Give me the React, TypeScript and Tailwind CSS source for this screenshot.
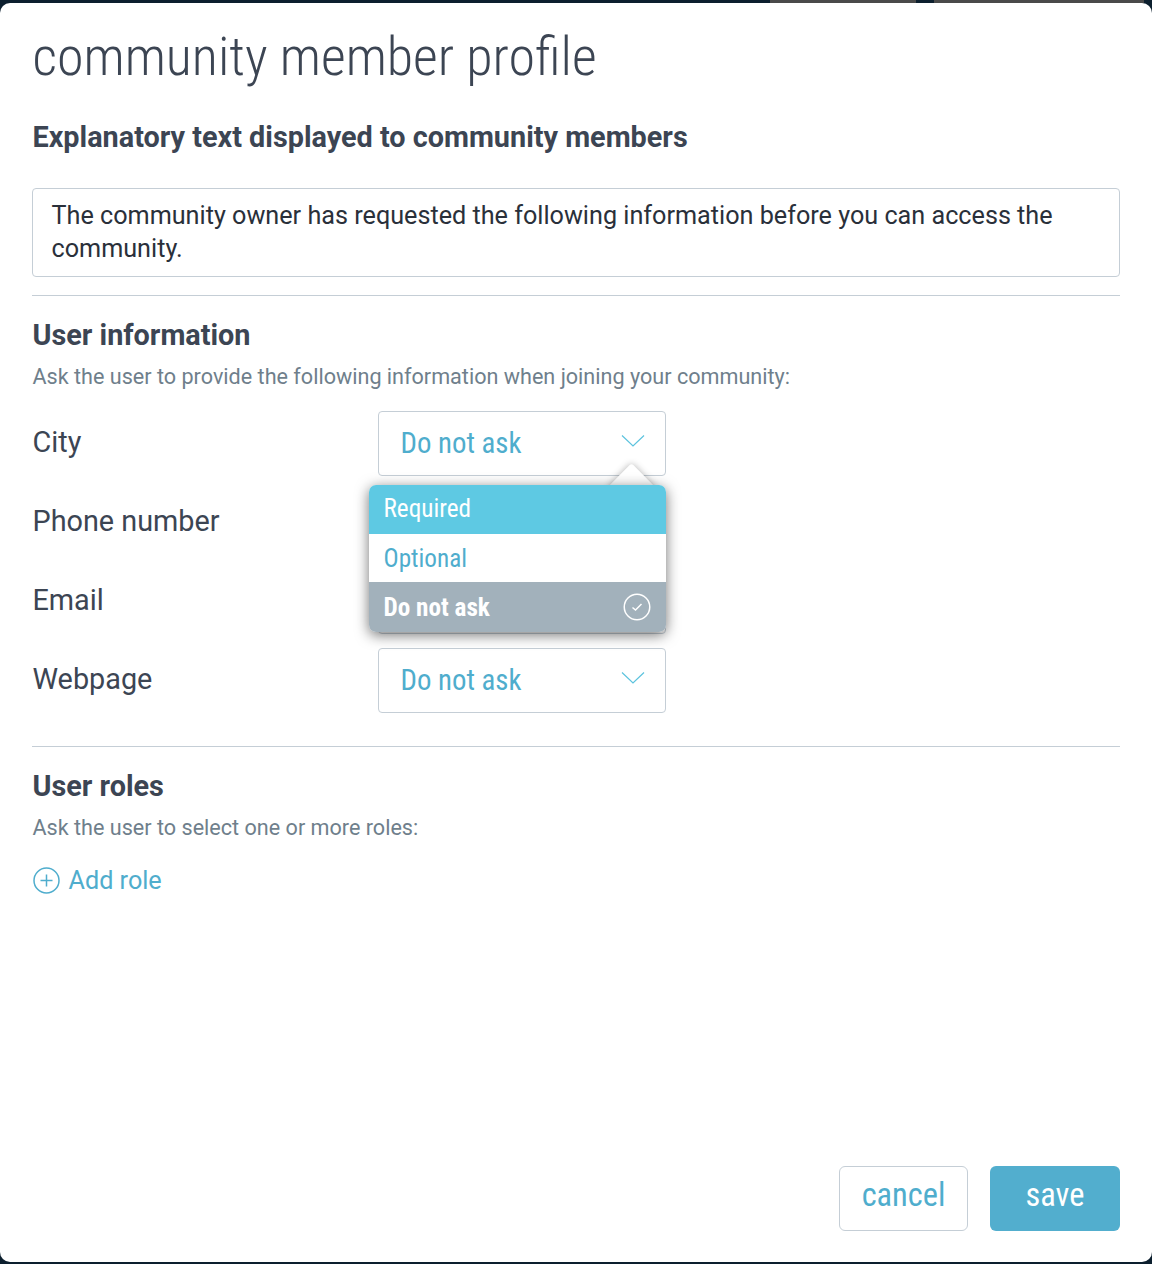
import React from "react";

const cond: React.CSSProperties = { fontFamily: '"Roboto Condensed", Roboto, sans-serif', fontStretch: "75%" };

function Chevron() {
  return (
    <svg width="24" height="14" viewBox="0 0 24 14" fill="none" className="text-[#5cc3de]">
      <path d="M1 1.5 L12 12 L23 1.5" stroke="currentColor" strokeWidth="1.2" />
    </svg>
  );
}

function Select({ hidden }: { hidden?: boolean }) {
  return (
    <div className="w-[288px] h-[65px] shrink-0 rounded-[4px] border border-[#c5ced6] bg-white flex items-center justify-between pl-[21.5px] pr-[20px] text-[#4fadcd] text-[28.8px] leading-none" style={cond}>
      {!hidden && <span>Do not ask</span>}
      {!hidden && <span className="-mt-[6px]"><Chevron /></span>}
    </div>
  );
}

function Row({ label, hidden }: { label: string; hidden?: boolean }) {
  return (
    <div className="flex items-center h-[65px]">
      <div className="w-[346px] pl-[0.5px] -mt-[1px] text-[28.8px] text-[#3c4553] font-normal">{label}</div>
      <Select hidden={hidden} />
    </div>
  );
}

export default function App() {
  return (
    <div className="w-[1152px] h-[1264px] bg-[#0c1f2e] overflow-hidden pt-[3px] relative" style={{ fontFamily: 'Roboto, sans-serif' }}>
      <div className="absolute left-[770px] top-0 w-[146px] h-[3px] bg-[#4a4a4a]" />
      <div className="absolute left-[934px] top-0 w-[210px] h-[3px] bg-[#4a4a4a]" />
      <div className="relative w-[1152px] h-[1259px] bg-white rounded-[10px] px-[32px] pt-[23px] flex flex-col">
        <h1 className="text-[54px] leading-[62px] font-light text-[#3c4553] pl-[0.5px]" style={cond}>community member profile</h1>
        <h2 className="mt-[33px] text-[28.8px] leading-[32px] font-bold text-[#3c4553] pl-[0.5px]">Explanatory text displayed to community members</h2>
        <div className="mt-[35px] h-[89px] rounded-[4px] border border-[#c5ced6] pl-[18.5px] pr-[19px] pt-[10px] text-[25.2px] leading-[33px] text-[#2a303a]">
          The community owner has requested the following information before you can access the community.
        </div>
        <div className="mt-[18px] h-px bg-[#c5ced6]" />
        <h3 className="mt-[23px] text-[28.8px] leading-[32px] font-bold text-[#3c4553] pl-[0.5px]">User information</h3>
        <p className="mt-[11px] text-[21.6px] leading-[30px] text-[#6f7f8c] pl-[0.5px]">Ask the user to provide the following information when joining your community:</p>
        <div className="mt-[19px] flex flex-col gap-[14px]">
          <Row label="City" />
          <Row label="Phone number" hidden />
          <Row label="Email" hidden />
          <Row label="Webpage" />
        </div>
        <div className="mt-[33px] h-px bg-[#c5ced6]" />
        <h3 className="mt-[23px] text-[28.8px] leading-[32px] font-bold text-[#3c4553] pl-[0.5px]">User roles</h3>
        <p className="mt-[11px] text-[21.6px] leading-[30px] text-[#6f7f8c] pl-[0.5px]">Ask the user to select one or more roles:</p>
        <div className="mt-[22px] flex items-center gap-[8.5px] pl-[1px] text-[#4fadcd] text-[25.2px] leading-[32px]">
          <svg width="27" height="27" viewBox="0 0 27 27" fill="none" stroke="currentColor" strokeWidth="1.5" className="-mt-[1px]">
            <circle cx="13.5" cy="13.5" r="12.5" />
            <path d="M13.5 7.5v12M7.5 13.5h12" />
          </svg>
          <span>Add role</span>
        </div>
        <div className="mt-auto mb-[31px] flex justify-end gap-[22px]">
          <div className="w-[129px] h-[65px] rounded-[6px] border border-[#c5ced6] flex items-center justify-center pb-[6px] text-[32.4px] text-[#4fadcd]" style={cond}>cancel</div>
          <div className="w-[130px] h-[65px] rounded-[6px] bg-[#52aece] flex items-center justify-center pb-[6px] text-[32.4px] text-white" style={cond}>save</div>
        </div>

        <div className="absolute left-[615px] top-[467px] w-[33px] h-[33px] rotate-45 rounded-[3px] bg-white shadow-[0_0_7px_rgba(0,0,0,0.3)]" />
        <div className="absolute left-[369px] top-[482px] w-[297px] rounded-[7px] bg-white shadow-[0_3px_14px_rgba(0,0,0,0.55)] text-[25.2px]" style={cond}>
          <div className="h-[49px] rounded-t-[7px] bg-[#5ec9e3] text-white flex items-center pl-[14.5px] pb-[1px]">Required</div>
          <div className="h-[48px] bg-white text-[#4fadcd] flex items-center pl-[14.5px] pt-[1px]">Optional</div>
          <div className="h-[50px] rounded-b-[7px] bg-[#a2b1bb] text-white font-bold flex items-center justify-between pl-[14.5px] pr-[15px]">
            <span className="mt-[1px]">Do not ask</span>
            <svg width="28" height="28" viewBox="0 0 28 28" fill="none" stroke="currentColor" strokeWidth="1.5">
              <circle cx="14" cy="14" r="12.75" />
              <path d="M9.5 14.5l3 2.5 6-6" />
            </svg>
          </div>
        </div>
      </div>
    </div>
  );
}
